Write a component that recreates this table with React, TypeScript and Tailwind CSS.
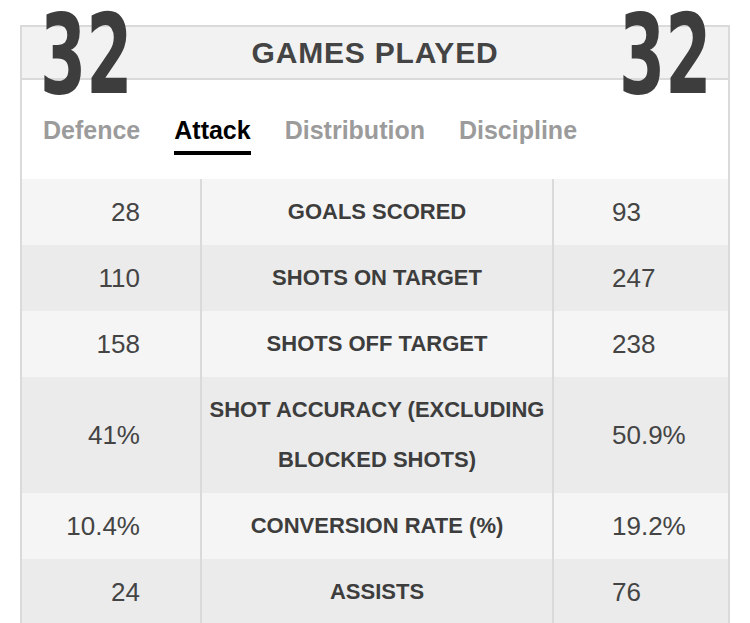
import React from 'react';

const rows = [
  { home: '28', label: 'GOALS SCORED', away: '93' },
  { home: '110', label: 'SHOTS ON TARGET', away: '247' },
  { home: '158', label: 'SHOTS OFF TARGET', away: '238' },
  { home: '41%', label: 'SHOT ACCURACY (EXCLUDING BLOCKED SHOTS)', away: '50.9%' },
  { home: '10.4%', label: 'CONVERSION RATE (%)', away: '19.2%' },
  { home: '24', label: 'ASSISTS', away: '76' },
];

const tabs = ['Defence', 'Attack', 'Distribution', 'Discipline'];

export default function App() {
  return (
    <div className="min-h-screen bg-white pt-[25px] pl-[20px] font-['Liberation_Sans',Arial,sans-serif] overflow-hidden">
      <div className="relative w-[710px] border-2 border-b-0 border-[#dadada]">
        {/* big games-played numbers spill over the frame */}
        <span className="absolute left-[18px] top-[-27px] origin-left scale-x-[0.67] text-[110px] leading-none font-bold text-[#3d3d3d] font-['DejaVu_Sans_Condensed','DejaVu_Sans',sans-serif]">
          32
        </span>
        <span className="absolute left-[597px] top-[-27px] origin-left scale-x-[0.67] text-[110px] leading-none font-bold text-[#3d3d3d] font-['DejaVu_Sans_Condensed','DejaVu_Sans',sans-serif]">
          32
        </span>

        <div className="h-[53px] bg-[#f2f2f2] border-b-2 border-[#dadada] flex items-center justify-center">
          <h1 className="text-[30px] font-bold tracking-[0.8px] text-[#444]">GAMES PLAYED</h1>
        </div>

        <div className="flex gap-[34px] pl-[21px] pt-[38px] pb-[24px]">
          {tabs.map((t) => (
            <div key={t} className="flex flex-col">
              <span className={`text-[25px] leading-none font-bold ${t === 'Attack' ? 'text-black' : 'text-[#9b9b9b]'}`}>{t}</span>
              <div className={`mt-2 h-1 ${t === 'Attack' ? 'bg-black' : 'bg-transparent'}`} />
            </div>
          ))}
        </div>

        <div>
          {rows.map((r, i) => (
            <div
              key={r.label}
              className={`grid grid-cols-[178px_354px_1fr] ${i % 2 === 0 ? 'bg-[#f5f5f5]' : 'bg-[#ebebeb]'}`}
            >
              <div className="flex items-center justify-end pr-[60px] text-[26px] text-[#444]">{r.home}</div>
              <div className="border-x-2 border-[#dadada] px-1 py-2 text-center text-[22px] leading-[50px] font-bold text-[#3d3d3d]">
                {r.label}
              </div>
              <div className="flex items-center pl-[58px] text-[26px] text-[#444]">{r.away}</div>
            </div>
          ))}
        </div>
      </div>
    </div>
  );
}
